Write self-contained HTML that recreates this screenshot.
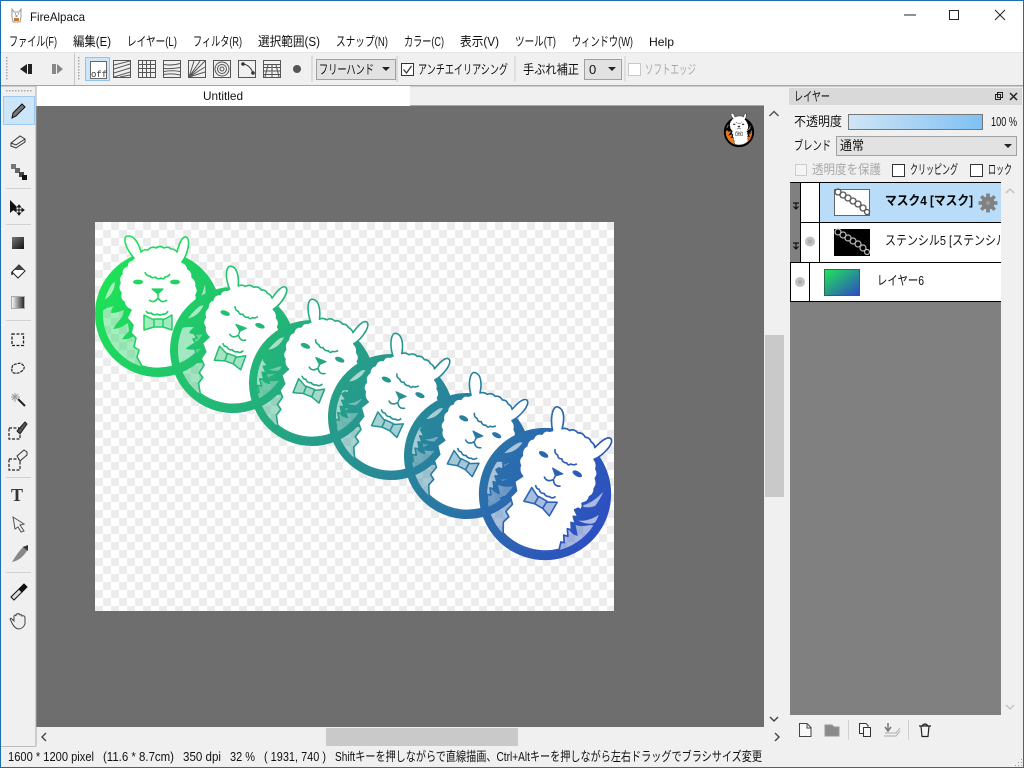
<!DOCTYPE html>
<html><head><meta charset="utf-8"><title>FireAlpaca</title>
<style>
html,body{margin:0;padding:0;width:1024px;height:768px;overflow:hidden;background:#f0f0f0}
svg{display:block}
text{font-family:"Liberation Sans","Noto Sans CJK JP",sans-serif;font-size:13px;fill:#111}
.l{font-size:12px}
.g{fill:#a8a8a8}
.b{font-weight:bold;fill:#000}
.i{fill:none;stroke:#555;stroke-width:1}
.t{fill-opacity:var(--t,.42)}
</style></head><body>
<svg width="1024" height="768" viewBox="0 0 1024 768" xmlns="http://www.w3.org/2000/svg">
<defs>
<pattern id="chk" x="95" y="222" width="16" height="16" patternUnits="userSpaceOnUse">
<rect width="16" height="16" fill="#fff"/><rect width="8" height="8" fill="#ececec"/><rect x="8" y="8" width="8" height="8" fill="#ececec"/>
</pattern>
<pattern id="dots" width="3" height="3" patternUnits="userSpaceOnUse"><rect width="1.5" height="1.5" fill="#a8a8a8"/></pattern>
<linearGradient id="cg" gradientUnits="userSpaceOnUse" x1="95" y1="250" x2="610" y2="560">
<stop offset="0" stop-color="#1de852"/><stop offset=".5" stop-color="#269a8c"/><stop offset="1" stop-color="#2e48c6"/>
</linearGradient>
<linearGradient id="op" x1="0" x2="1" y1="0" y2="0"><stop offset="0" stop-color="#cfe5f5"/><stop offset="1" stop-color="#7fc0f4"/></linearGradient>
<linearGradient id="lg" x1="0" x2="1" y1="0" y2="1"><stop offset="0" stop-color="#1fe854"/><stop offset="1" stop-color="#2e48c6"/></linearGradient>
<linearGradient id="sq" x1="0" x2="1" y1="0" y2="1"><stop offset="0" stop-color="#777"/><stop offset="1" stop-color="#111"/></linearGradient>
<linearGradient id="gr" x1="0" x2="1" y1="0" y2="0"><stop offset="0" stop-color="#fff"/><stop offset="1" stop-color="#222"/></linearGradient>
<clipPath id="inner"><circle r="56"/></clipPath>
<clipPath id="listclip"><rect x="790" y="182" width="211" height="120"/></clipPath>
<g id="alp">
<circle r="55" fill="#000" class="t"/>
<g clip-path="url(#inner)">
<path d="M-70,-5L-56,-3Q-50,-7-44,-8Q-47,-5-47,-1Q-41,-1-34,-4L-36,3Q-42,10-45,15Q-38,15-30,9L-29,17Q-33,21-36,25Q-30,26-24,22L-15,0V-70H-70Z"/>
<path d="M15,-70H70V-2L52,4Q46,10,40,11L47,19Q42,21,37,18L15,10Z"/>
<path d="M-56,-13Q-55,-25-43,-32Q-44,-18-56,-13ZM47,-30Q44,-15,35,-7Q42,-8,47,-14Q48,-22,47,-30ZM40,6Q50,2,56,-12Q57,-2,53,2Q47,6,40,6Z" fill="#fff" opacity=".6"/>
</g>
<circle r="59" fill="none" stroke="#000" stroke-width="8"/>
<path d="M-24,-56C-33,-66-36,-78-30,-78C-24,-79-19,-70-17,-62q3,-3 7,-2q3,-4 8,-2q4,-3 8,0q4,-2 7,1q4,0 6,3C21,-70 24,-78 28,-77C33,-75 30,-60 24,-52q5,2 6,7q5,3 4,8q5,4 4,9q3,5 0,9q2,5 -3,9q3,3 2,6L34,-4L32,-1L38,3L34,5L39,10L35,11L39,17L35,18L39,24L35,25L39,31L36,32L38,39A55,55 0 0 1 -16,52L-21,43L-19,36L-24,33L-22,24L-27,19L-25,11L-31,4L-27,-4Q-33,-6-34,-12Q-39,-15-37,-21Q-41,-26-38,-31Q-40,-37-36,-40Q-37,-46-31,-48Q-31,-53-26,-54Z" fill="#fff" stroke="#000" stroke-width="1.600" stroke-linejoin="round"/>
<ellipse cx="-20" cy="-32" rx="5" ry="2.400"/><ellipse cx="17" cy="-32" rx="5" ry="2.400"/>
<path d="M-13,-42q1,4 5,4q2,3 5,1q3,3 6,1q3,2 4,-1q3,0 5,-3" fill="none" stroke="#000" stroke-width="1.600"/>
<path d="M-6,-25H5L0,-20Z" stroke="#000" stroke-width="1.200" stroke-linejoin="round"/>
<path d="M0,-20V-17M-9,-14q5,4 9,-2q4,6 9,2" fill="none" stroke="#000" stroke-width="1.600"/>
<path d="M-12,-3q2,3 5,2q3,3 6,1q3,2 6,0q3,1 5,-3" fill="none" stroke="#000" stroke-width="1.600"/>
<path d="M-14,1L-4,6V13L-14,16ZM14,1L5,6V13L14,16ZM-4,5H5V13H-4Z" fill="#000" class="t" stroke="#000" stroke-width="1.500" stroke-linejoin="round"/>
</g>
<g id="six">
<use href="#alp" transform="translate(158,314)"/>
<use href="#alp" transform="translate(233,350) rotate(20)"/>
<use href="#alp" transform="translate(312,383) rotate(22)"/>
<use href="#alp" transform="translate(391,417) rotate(25)"/>
<use href="#alp" transform="translate(467,456) rotate(27)"/>
<use href="#alp" transform="translate(545,494) rotate(30) scale(1.050)"/>
</g>
<mask id="am" maskUnits="userSpaceOnUse" x="95" y="222" width="519" height="389" style="mask-type:alpha"><use href="#six"/></mask>
</defs>

<!-- window -->
<rect width="1024" height="768" fill="#f0f0f0"/>
<rect x="0" y="0" width="1024" height="52" fill="#fff"/>
<!-- title -->
<g>
<path d="M12,9l2,3h5l2,-3v8l-1,5h-7l-1,-5Z" fill="#fff" stroke="#999"/>
<rect x="14" y="18" width="5" height="3" fill="#c9772e"/>
<path d="M15,14h.8M18,14h.8M15.500,16h2" stroke="#333"/>
</g>
<text x="30" y="21" class="l" textLength="55" lengthAdjust="spacingAndGlyphs">FireAlpaca</text>
<path d="M904,15H916" stroke="#222"/><rect x="949.500" y="10.500" width="9" height="9" fill="none" stroke="#222"/><path d="M995,10L1005,20M1005,10L995,20" stroke="#222"/>
<!-- menu -->
<text x="9" y="46" textLength="48" lengthAdjust="spacingAndGlyphs">ファイル(F)</text>
<text x="73" y="46" textLength="38" lengthAdjust="spacingAndGlyphs">編集(E)</text>
<text x="127" y="46" textLength="50" lengthAdjust="spacingAndGlyphs">レイヤー(L)</text>
<text x="193" y="46" textLength="49" lengthAdjust="spacingAndGlyphs">フィルタ(R)</text>
<text x="258" y="46" textLength="62" lengthAdjust="spacingAndGlyphs">選択範囲(S)</text>
<text x="336" y="46" textLength="52" lengthAdjust="spacingAndGlyphs">スナップ(N)</text>
<text x="404" y="46" textLength="40" lengthAdjust="spacingAndGlyphs">カラー(C)</text>
<text x="460" y="46" textLength="39" lengthAdjust="spacingAndGlyphs">表示(V)</text>
<text x="515" y="46" textLength="41" lengthAdjust="spacingAndGlyphs">ツール(T)</text>
<text x="572" y="46" textLength="61" lengthAdjust="spacingAndGlyphs">ウィンドウ(W)</text>
<text x="649" y="46" class="l" textLength="25" lengthAdjust="spacingAndGlyphs">Help</text>
<!-- toolbar -->
<rect x="1" y="52" width="1022" height="33" fill="#f0f0f0"/>
<rect x="0" y="52" width="1024" height="1" fill="#e6e6e6"/>
<rect x="0" y="85" width="1024" height="1.500" fill="#a6a6a6"/>
<rect x="5" y="56" width="3" height="25" fill="url(#dots)"/>
<rect x="78" y="56" width="3" height="25" fill="url(#dots)"/>
<rect x="74" y="53" width="1" height="32" fill="#c8c8c8"/>
<path d="M27,64L20,69L27,74ZM28,64h4v10h-4Z" fill="#222"/>
<path d="M52,64h4v10h-4ZM57,64L63,69L57,74Z" fill="#888"/>
<rect x="85.500" y="57.500" width="24" height="23" fill="#cde5f8" stroke="#8fc4ef"/>
<rect x="90.500" y="61.500" width="16" height="17" fill="#fff" stroke="#666"/>
<text x="91" y="77" style="font-family:'Liberation Mono',monospace;font-size:9px;fill:#333">off</text>
<g class="i">
<rect x="113.500" y="60.500" width="17" height="17"/><path d="M114,65L130,61M114,69L130,64M114,73L130,68M114,77L130,72M120,77L130,75"/>
<rect x="138.500" y="60.500" width="17" height="17"/><path d="M139,64.500H155M139,68.500H155M139,72.500H155M142.500,61V77M146.500,61V77M150.500,61V77"/>
<rect x="163.500" y="60.500" width="17" height="17"/><path d="M164,64.500Q172,66 180,63.500M164,68.500Q172,69 180,67.500M164,71.500Q172,70 180,71.500M164,74.500Q172,73 180,75"/>
<rect x="188.500" y="60.500" width="17" height="17"/><path d="M189,77L205,61M189,77L200,61M189,77L194,61M189,77L205,67M189,77L205,72"/>
<rect x="213.500" y="60.500" width="17" height="17"/><circle cx="222" cy="69" r="7"/><circle cx="222" cy="69" r="4.500"/><circle cx="222" cy="69" r="2"/>
<rect x="238.500" y="60.500" width="17" height="17"/><path d="M243,64Q250,65 253,73" stroke="#333"/>
<rect x="263.500" y="60.500" width="17" height="17"/><path d="M264,64.500H280M264,67.500H280M264,71H280M264,74.500H280M268,65L265,77M272,65V77M276,65L279,77"/>
</g>
<circle cx="243" cy="64" r="1.800" fill="#333"/><circle cx="253" cy="73" r="1.800" fill="#333"/>
<circle cx="297" cy="69" r="4" fill="#555"/>
<rect x="311.500" y="56" width="1" height="26" fill="#c8c8c8"/>
<rect x="316.500" y="59.500" width="79" height="20" fill="#e2e2e2" stroke="#a0a0a0"/>
<text x="319" y="74" textLength="55" lengthAdjust="spacingAndGlyphs">フリーハンド</text>
<path d="M382,67h8l-4,4Z" fill="#222"/>
<rect x="396.500" y="56" width="1" height="26" fill="#c8c8c8"/>
<rect x="401.500" y="63.500" width="12" height="12" fill="#fff" stroke="#333"/>
<path d="M403.500,69.500l3,3.500l5,-7" fill="none" stroke="#333" stroke-width="1.200"/>
<text x="418" y="74" textLength="90" lengthAdjust="spacingAndGlyphs">アンチエイリアシング</text>
<rect x="514.500" y="56" width="1" height="26" fill="#d0d0d0"/>
<text x="523" y="74" textLength="56" lengthAdjust="spacingAndGlyphs">手ぶれ補正</text>
<rect x="584.500" y="59.500" width="37" height="20" fill="#e2e2e2" stroke="#a0a0a0"/>
<text x="589" y="74">0</text>
<path d="M608,67h8l-4,4Z" fill="#222"/>
<rect x="624.500" y="56" width="1" height="26" fill="#d0d0d0"/>
<rect x="628.500" y="63.500" width="12" height="12" fill="#fff" stroke="#c8c8c8"/>
<text x="645" y="74" textLength="51" lengthAdjust="spacingAndGlyphs" class="g">ソフトエッジ</text>

<!-- tab -->
<rect x="36" y="86" width="374" height="20" fill="#fff"/>
<text x="203" y="100" class="l" textLength="40" lengthAdjust="spacingAndGlyphs">Untitled</text>

<!-- main grey -->
<rect x="36" y="106" width="728" height="621" fill="#6e6e6e"/>
<rect x="410" y="105" width="354" height="1" fill="#a8a8a8"/>
<!-- canvas -->
<rect x="95" y="222" width="519" height="389" fill="url(#chk)"/>
<g mask="url(#am)">
<g style="isolation:isolate">
<use href="#six"/>
<rect x="95" y="222" width="519" height="389" fill="url(#cg)" style="mix-blend-mode:screen"/>
</g>
</g>
<!-- corner badge -->
<circle cx="739" cy="131" r="14" fill="#f07a18"/>
<use href="#alp" transform="translate(739,132) scale(.240)" style="--t:0"/>

<!-- scrollbars -->
<rect x="765" y="335" width="19" height="162" fill="#c9c9c9"/>
<path d="M769.500,116L774,111.500L778.500,116" fill="none" stroke="#555" stroke-width="1.500"/>
<path d="M770,717L774,721L778,717" fill="none" stroke="#444" stroke-width="1.400"/>
<rect x="326" y="728" width="192" height="18" fill="#c9c9c9"/>
<path d="M46,733L42,737L46,741" fill="none" stroke="#444" stroke-width="1.400"/>
<path d="M775,733L779,737L775,741" fill="none" stroke="#444" stroke-width="1.400"/>
<rect x="0" y="746" width="36" height="1" fill="#bcbcbc"/>

<!-- tool panel -->
<rect x="35.500" y="86" width="1" height="660" fill="#a8a8a8"/>
<rect x="6" y="89" width="27" height="3" fill="url(#dots)"/>
<rect x="3.500" y="96.500" width="31" height="28" fill="#cde5f8" stroke="#9ccaf0"/>
<g fill="#d0d0d0">
<rect x="6" y="188" width="25" height="1"/><rect x="6" y="224" width="25" height="1"/><rect x="6" y="320" width="25" height="1"/><rect x="6" y="477" width="25" height="1"/><rect x="6" y="572" width="25" height="1"/>
</g>
<!-- pencil -->
<path d="M12,118L13,113L22,104L25,107L16,116Z" fill="#777" stroke="#111"/>
<!-- eraser -->
<path d="M11,143L20,136L25,139V142L16,148L11,146Z" fill="#eee" stroke="#333"/>
<path d="M11,143L16,145L25,139" fill="none" stroke="#333"/>
<!-- dots -->
<rect x="11" y="164" width="5" height="5" fill="#777"/><rect x="15" y="168" width="5" height="5" fill="#666"/><rect x="19" y="172" width="5" height="5" fill="#444"/><rect x="22" y="175" width="5" height="5" fill="#111"/>
<!-- move -->
<path d="M10,200V213L17,207Z" fill="#111"/>
<path d="M19,205V215M14,210H24M19,205l-1.500,2h3ZM19,215l-1.500,-2h3ZM14,210l2,-1.500v3ZM24,210l-2,-1.500v3Z" stroke="#111" fill="#111" stroke-width="1"/>
<!-- square -->
<rect x="12" y="237" width="12" height="12" fill="url(#sq)"/>
<!-- bucket -->
<path d="M12,272L19,265L25,271L18,278Z" fill="#fff" stroke="#222"/>
<path d="M14,270L19,265L24,270Z" fill="#444"/><path d="M12,272v3" stroke="#222" stroke-width="1.500"/>
<!-- gradient -->
<rect x="11.500" y="296.500" width="13" height="12" fill="url(#gr)" stroke="#aaa"/>
<!-- select rect -->
<rect x="12" y="334" width="11.500" height="11.500" fill="none" stroke="#222" stroke-width="1.300" stroke-dasharray="3 1.500"/>
<!-- lasso -->
<path d="M12,368Q12,364 17,364Q20,362 23,365Q26,368 22,371Q18,374 14,373Q11,372 12,368Z" fill="none" stroke="#222" stroke-width="1.200" stroke-dasharray="3 1"/>
<!-- wand -->
<path d="M18,399L25,406" stroke="#222" stroke-width="2"/>
<path d="M15,393V402M11,397H20M12,394L18,400M18,394L12,400" stroke="#999" stroke-width="1"/>
<!-- sel pen -->
<rect x="9" y="428" width="11" height="11" fill="none" stroke="#222" stroke-dasharray="3 1.500" stroke-width="1.200"/>
<path d="M17,431L25,422L27,424L20,434Z" fill="#555" stroke="#222"/>
<!-- sel eraser -->
<rect x="9" y="459" width="11" height="11" fill="none" stroke="#222" stroke-dasharray="3 1.500" stroke-width="1.200"/>
<path d="M17,456L24,450L27,452V455L20,461Z" fill="#eee" stroke="#333"/>
<!-- T -->
<text x="11" y="501" style="font-family:'Liberation Serif',serif;font-size:18px;font-weight:bold;fill:#333">T</text>
<!-- arrow -->
<path d="M13,517L24,524L20,525L24,531L21,532L18,527L15,529Z" fill="#eee" stroke="#555"/>
<!-- knife -->
<path d="M12,562Q18,552 24,546L28,549Q22,560 12,562Z" fill="#888"/><path d="M23,547L28,545V551Z" fill="#333"/>
<!-- dropper -->
<path d="M11,597L19,589L22,592L14,600Z" fill="#ddd" stroke="#111"/><path d="M19,589L24,584L27,587L22,592Z" fill="#111" stroke="#111"/>
<!-- hand -->
<path d="M11,621Q9,617 12,619L14,621V616Q15,614 16,616Q16,613 18,614Q19,613 20,615Q22,614 22,616Q25,615 25,618V624Q23,629 18,629Q14,628 11,621Z" fill="#eee" stroke="#444"/>

<!-- layer panel -->
<rect x="789" y="88" width="233" height="17" fill="#d9d9d9"/>
<text x="794" y="101" textLength="36" lengthAdjust="spacingAndGlyphs">レイヤー</text>
<rect x="995.500" y="94.500" width="5" height="5" fill="none" stroke="#222"/><rect x="997.500" y="92.500" width="5" height="5" fill="none" stroke="#222"/>
<path d="M1010,93L1017,100M1017,93L1010,100" stroke="#222" stroke-width="1.500"/>
<text x="794" y="126" textLength="48" lengthAdjust="spacingAndGlyphs">不透明度</text>
<rect x="848.500" y="114.500" width="134" height="15" fill="url(#op)" stroke="#777"/>
<text x="991" y="126" textLength="26" lengthAdjust="spacingAndGlyphs">100 %</text>
<text x="794" y="150" textLength="37" lengthAdjust="spacingAndGlyphs">ブレンド</text>
<rect x="836.500" y="136.500" width="180" height="19" fill="#e2e2e2" stroke="#a0a0a0"/>
<text x="840" y="150" textLength="24" lengthAdjust="spacingAndGlyphs">通常</text>
<path d="M1004,144h8l-4,4Z" fill="#222"/>
<rect x="795.500" y="164.500" width="11" height="11" fill="#f4f4f4" stroke="#ccc"/>
<text x="812" y="174" textLength="69" lengthAdjust="spacingAndGlyphs" class="g">透明度を保護</text>
<rect x="892.500" y="164.500" width="12" height="12" fill="#fff" stroke="#333"/>
<text x="910" y="174" textLength="48" lengthAdjust="spacingAndGlyphs">クリッピング</text>
<rect x="970.500" y="164.500" width="12" height="12" fill="#fff" stroke="#333"/>
<text x="988" y="174" textLength="24" lengthAdjust="spacingAndGlyphs">ロック</text>

<rect x="790" y="182" width="211" height="533" fill="#808080"/>
<!-- row1 -->
<rect x="800" y="182" width="20" height="40" fill="#fff"/>
<rect x="820" y="182" width="181" height="40" fill="#b9dcf8"/>
<rect x="834.500" y="189.500" width="35" height="26" fill="#fff" stroke="#666"/>
<g fill="none" stroke="#555" stroke-width="1.300">
<circle cx="838" cy="192" r="3"/><circle cx="843" cy="195" r="3"/><circle cx="848" cy="198" r="3"/><circle cx="853" cy="201" r="3"/><circle cx="858" cy="204" r="3"/><circle cx="863" cy="208" r="3"/><circle cx="867" cy="212" r="2.500"/>
</g>
<text x="885" y="205" class="b" textLength="88" lengthAdjust="spacingAndGlyphs">マスク4 [マスク]</text>
<g transform="translate(988,203)" fill="#808080"><circle r="6.500"/><path d="M-1.800,-9.500h3.600v19h-3.600ZM-9.500,-1.800v3.600h19v-3.600Z"/><path d="M-1.800,-9.500h3.600v19h-3.600ZM-9.500,-1.800v3.600h19v-3.600Z" transform="rotate(45)"/><circle r="2.200" fill="#9a9a9a"/></g>
<path d="M793,203H799M796,203V209M793.500,206.500L796,209L798.500,206.500" fill="none" stroke="#111" stroke-width="1.200"/>
<!-- row2 -->
<rect x="800" y="222" width="201" height="40" fill="#fff"/>
<circle cx="810" cy="241.500" r="5" fill="#c0c0c0"/><circle cx="810" cy="241.500" r="2" fill="#aaa"/>
<rect x="834" y="229" width="36" height="27" fill="#000"/>
<g fill="none" stroke="#bbb" stroke-width="1.200">
<circle cx="838" cy="232" r="3"/><circle cx="843" cy="235" r="3"/><circle cx="848" cy="238" r="3"/><circle cx="853" cy="241" r="3"/><circle cx="858" cy="244" r="3"/><circle cx="863" cy="248" r="3"/><circle cx="867" cy="252" r="2.500"/>
</g>
<g clip-path="url(#listclip)"><text x="885" y="245" textLength="122" lengthAdjust="spacingAndGlyphs">ステンシル5 [ステンシル</text></g>
<path d="M793,243H799M796,243V249M793.500,246.500L796,249L798.500,246.500" fill="none" stroke="#111" stroke-width="1.200"/>
<!-- row3 -->
<rect x="790" y="262" width="211" height="40" fill="#fff"/>
<circle cx="800" cy="282" r="5" fill="#c0c0c0"/><circle cx="800" cy="282" r="2" fill="#aaa"/>
<rect x="824.500" y="269.500" width="35" height="26" fill="url(#lg)" stroke="#2a6a50"/>
<text x="877" y="285" textLength="47" lengthAdjust="spacingAndGlyphs">レイヤー6</text>
<!-- row lines -->
<g fill="#000">
<rect x="790" y="182" width="211" height="1"/><rect x="800" y="222" width="201" height="1"/><rect x="790" y="262" width="211" height="1"/><rect x="790" y="301" width="211" height="1"/>
<rect x="800" y="182" width="1" height="80"/><rect x="819" y="182" width="1" height="80"/><rect x="809" y="262" width="1" height="40"/><rect x="790" y="262" width="1" height="40"/>
</g>
<path d="M1006,193L1010,189L1014,193" fill="none" stroke="#c4c4c4" stroke-width="1.500"/>
<path d="M1006,705L1010,709L1014,705" fill="none" stroke="#c4c4c4" stroke-width="1.500"/>
<!-- bottom icons -->
<path d="M799.500,723.500H807L811,727.500V736.500H799.500Z" fill="#f8f8f8" stroke="#444"/><path d="M807,724.500V728H811" fill="none" stroke="#444"/>
<path d="M825,725H832L834,727H839V736H825Z" fill="#8a8a8a" stroke="#999"/>
<rect x="848" y="720" width="1" height="20" fill="#d0d0d0"/>
<path d="M859.500,723.500H866L868,725.500V733.500H859.500Z" fill="#f8f8f8" stroke="#333"/><path d="M863.500,727.500H870.500V736.500H863.500Z" fill="#f8f8f8" stroke="#333"/>
<path d="M888,723V730M885,727L888,731L891,727" fill="none" stroke="#777" stroke-width="1.500"/><path d="M885,733H896L900,728M884,736H896L900,731" fill="none" stroke="#aaa"/>
<rect x="908" y="720" width="1" height="20" fill="#d0d0d0"/>
<path d="M919,726H931M921,726L922,736.500H928L929,726M922,726Q925,722 928,726" fill="#f4f4f4" stroke="#222" stroke-width="1.200"/>
<path d="M1021,759h1v1h-1zM1018,762h1v1h-1zM1021,762h1v1h-1zM1015,765h1v1h-1zM1018,765h1v1h-1zM1021,765h1v1h-1z" fill="#999"/>

<!-- status -->
<text x="8" y="761" textLength="86" lengthAdjust="spacingAndGlyphs">1600 * 1200 pixel</text>
<text x="103" y="761" textLength="71" lengthAdjust="spacingAndGlyphs">(11.6 * 8.7cm)</text>
<text x="183" y="761" textLength="38" lengthAdjust="spacingAndGlyphs">350 dpi</text>
<text x="230" y="761" textLength="25" lengthAdjust="spacingAndGlyphs">32 %</text>
<text x="264" y="761" textLength="62" lengthAdjust="spacingAndGlyphs">( 1931, 740 )</text>
<text x="335" y="761" textLength="427" lengthAdjust="spacingAndGlyphs">Shiftキーを押しながらで直線描画、Ctrl+Altキーを押しながら左右ドラッグでブラシサイズ変更</text>

<!-- window border -->
<rect x="0" y="0" width="1024" height="1" fill="#1b6fae"/>
<rect x="0" y="0" width="1" height="768" fill="#1b6fae"/>
<rect x="1023" y="0" width="1" height="768" fill="#1b6fae"/>
<rect x="0" y="767" width="1024" height="1" fill="#1b6fae"/>
</svg>
</body></html>
